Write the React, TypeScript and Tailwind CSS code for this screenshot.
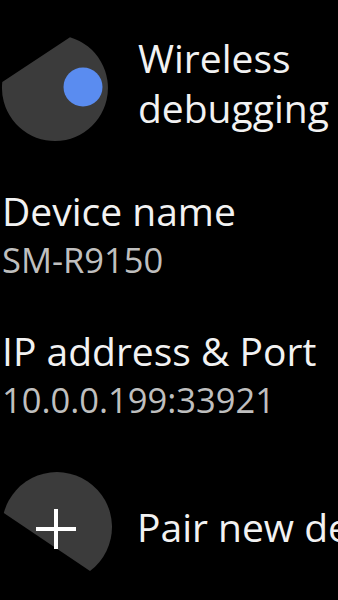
import React from 'react';

const font = { fontFamily: '"Open Sans", "Noto Sans", sans-serif' };

const ToggleChip = () => (
  <svg width="113" height="110" viewBox="0 33 113 110" className="shrink-0">
    <path d="M 2.3 82 L 70 37.2 A 53 53 0 1 1 2.3 82 Z" fill="#3b3b3b" />
    <circle cx="83" cy="87" r="19.5" fill="#5a8cf0" />
  </svg>
);

const PlusChip = () => (
  <svg width="113" height="110" viewBox="0 472 113 110" className="shrink-0">
    <path d="M 3.8 513 A 55 55 0 1 1 90 571 Z" fill="#3b3b3b" />
    <path d="M 36 529 H 76 M 56 509 V 549" stroke="#ffffff" strokeWidth="4" />
  </svg>
);

const InfoBlock = ({ title, value, className }: { title: string; value: string; className?: string }) => (
  <div className={`flex flex-col pl-[2px] ${className ?? ''}`}>
    <div className="text-[39px] leading-[50px] text-[#f2f2f2] whitespace-nowrap">{title}</div>
    <div className="text-[34.5px] leading-[48px] text-[#bfbfbf] whitespace-nowrap">{value}</div>
  </div>
);

export default function App() {
  return (
    <div className="w-[338px] h-[600px] bg-black overflow-hidden flex flex-col" style={font}>
      <div className="mt-[33px] flex items-start">
        <ToggleChip />
        <div className="ml-[25px] text-[39px] leading-[50px] text-[#f2f2f2] whitespace-nowrap">
          <div>Wireless</div>
          <div>debugging</div>
        </div>
      </div>

      <InfoBlock title="Device name" value="SM-R9150" className="mt-[43px]" />
      <InfoBlock title="IP address & Port" value="10.0.0.199:33921" className="mt-[42px]" />

      <div className="mt-[48px] flex items-start">
        <PlusChip />
        <div className="ml-[24px] mt-[30px] text-[39px] leading-[50px] text-[#f2f2f2] whitespace-nowrap">
          Pair new devices
        </div>
      </div>
    </div>
  );
}
